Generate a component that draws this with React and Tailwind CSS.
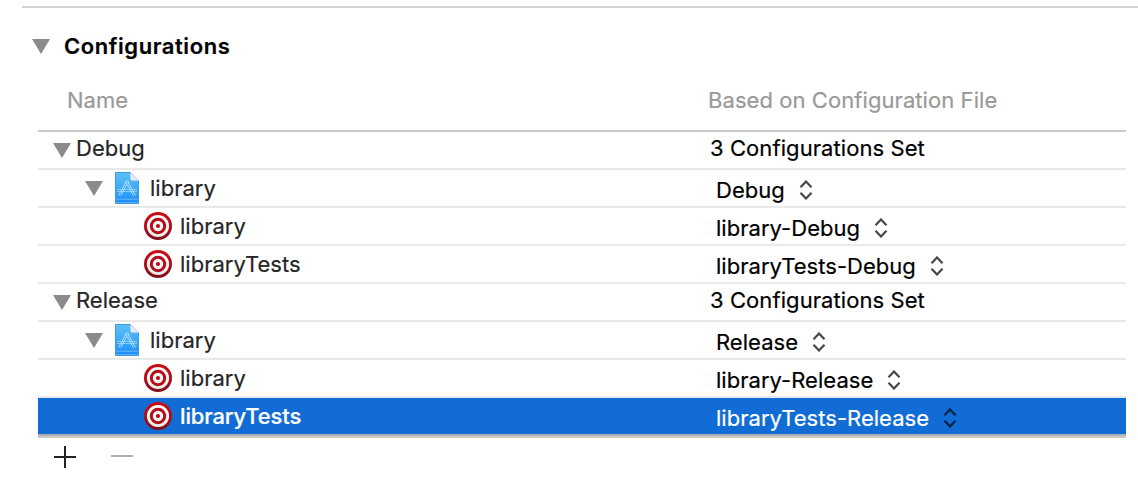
const rows = [
  { kind: 'group', name: 'Debug', value: '3 Configurations Set' },
  { kind: 'project', name: 'library', value: 'Debug' },
  { kind: 'target', name: 'library', value: 'library-Debug' },
  { kind: 'target', name: 'libraryTests', value: 'libraryTests-Debug' },
  { kind: 'group', name: 'Release', value: '3 Configurations Set' },
  { kind: 'project', name: 'library', value: 'Release' },
  { kind: 'target', name: 'library', value: 'library-Release' },
  { kind: 'target', name: 'libraryTests', value: 'libraryTests-Release', selected: true },
];

function Triangle() {
  return (
    <svg width="18" height="15" viewBox="0 0 18 15" className="shrink-0">
      <path d="M0 0H18L9 15Z" fill="#8b8b8b" />
    </svg>
  );
}

function ProjectIcon() {
  return (
    <svg width="24" height="32" viewBox="0 0 24 32" className="shrink-0">
      <defs>
        <linearGradient id="sheet" x1="0" y1="0" x2="0" y2="1">
          <stop offset="0" stopColor="#5cc3f6" />
          <stop offset="0.5" stopColor="#3daaf8" />
          <stop offset="1" stopColor="#1e8bfb" />
        </linearGradient>
      </defs>
      <path d="M0.5 0.5H15.5L23.5 8.5V31.5H0.5Z" fill="url(#sheet)" stroke="#3c9be6" />
      <path d="M15.5 0.5V6.500Q15.500 8.500 17.500 8.500H23.500Z" fill="#e6eef3" stroke="#b9cedb" strokeWidth="0.7" />
      <path d="M1 27.300H23" stroke="#8fd0fc" strokeWidth="0.8" opacity="0.7" />
      <path d="M2 17.500H22M2 19.500H22" stroke="#a9dafd" strokeWidth="0.7" />
      <path d="M10.800 10.500L3.500 23.500M13.200 10.500L20.500 23.500M11.500 13L5.800 23.500M12.500 13L18.200 23.500" fill="none" stroke="#c3e7fd" strokeWidth="0.9" />
      <circle cx="12" cy="10.500" r="1.700" fill="none" stroke="#c3e7fd" strokeWidth="0.8" />
      <path d="M1 30.600H23" stroke="#6bb9fa" strokeWidth="0.8" />
    </svg>
  );
}

function TargetIcon() {
  return (
    <svg width="28" height="28" viewBox="0 0 28 28" className="shrink-0">
      <defs>
        <linearGradient id="rim" x1="0" y1="0" x2="0" y2="1">
          <stop offset="0" stopColor="#cf0a14" />
          <stop offset="0.5" stopColor="#b00d18" />
          <stop offset="1" stopColor="#7d0f18" />
        </linearGradient>
        <linearGradient id="face" x1="0" y1="0" x2="0" y2="1">
          <stop offset="0" stopColor="#ffffff" />
          <stop offset="1" stopColor="#ececec" />
        </linearGradient>
      </defs>
      <circle cx="14" cy="14" r="14" fill="url(#rim)" />
      <circle cx="14" cy="14" r="11.1" fill="url(#face)" />
      <circle cx="14" cy="14" r="6.700" fill="none" stroke="#b50d17" strokeWidth="3" />
      <circle cx="14" cy="14" r="2.1" fill="#b50d17" />
    </svg>
  );
}

function UpDown({ selected }) {
  return (
    <svg width="14" height="20" viewBox="0 0 14 20" className="shrink-0">
      <path
        d="M1.5 7.2L7 1.5L12.5 7.2M1.5 12.8L7 18.5L12.5 12.8"
        fill="none"
        stroke={selected ? '#082042' : '#474747'}
        strokeWidth="2.2"
      />
    </svg>
  );
}

const indent = { group: 'pl-[15px]', project: 'pl-[47px]', target: 'pl-[106px]' };
const labelStyle = {
  group: 'ml-[5px] pb-1',
  project: 'ml-[11px]',
  target: 'ml-2',
};

function Row({ kind, name, value, selected, last }) {
  const group = kind === 'group';
  return (
    <div
      className={`flex h-[38px] border-b-2 leading-9 ${last ? 'border-[#b0b0b0]' : 'border-[#e9e9e9]'} ${
        selected ? 'bg-[#116cd6] text-white' : 'text-black'
      }`}
    >
      <div className={`flex w-[672px] items-center ${indent[kind]}`}>
        {kind !== 'target' && <Triangle />}
        {kind === 'project' && (
          <span className="ml-3">
            <ProjectIcon />
          </span>
        )}
        {kind === 'target' && <TargetIcon />}
        <span className={`${labelStyle[kind]} ${selected ? 'font-medium tracking-[-0.15px]' : 'text-[#262626]'}`}>{name}</span>
      </div>
      <div className={`flex items-center ${group ? 'pb-1 tracking-[0.08px]' : 'pt-1 pl-[6px] tracking-[0.03px]'}`}>
        <span>{value}</span>
        {!group && (
          <span className="ml-[14px]">
            <UpDown selected={selected} />
          </span>
        )}
      </div>
    </div>
  );
}

export default function App() {
  return (
    <div className="h-[480px] overflow-hidden bg-white pt-[6px] font-['Inter','Liberation_Sans',sans-serif] text-[22px] text-black [-webkit-text-stroke:0.2px]">
      <div className="ml-[22px] h-[2px] bg-[#d3d3d3]" />
      <div className="flex h-[76px] items-center pl-8">
        <Triangle />
        <h2 className="ml-[14px] leading-9 font-semibold tracking-[0.57px]">Configurations</h2>
      </div>
      <div className="mr-3 ml-[38px]">
        <div className="flex h-12 border-b-2 border-[#c8c8c8] leading-8 text-[#999999]">
          <div className="w-[670px] pl-[29px]">Name</div>
          <div className="tracking-[0.07px]">Based on Configuration File</div>
        </div>
        {rows.map((row, i) => (
          <Row key={i} {...row} last={i === rows.length - 1} />
        ))}
        <div className="h-[2px] bg-[#cbcbcb]" />
        <div className="flex pt-2 pl-4">
          <svg width="22" height="22" viewBox="0 0 22 22">
            <path d="M11 0V22M0 11H22" stroke="#222222" strokeWidth="2" />
          </svg>
          <svg width="22" height="22" viewBox="0 0 22 22" className="ml-[35px]">
            <path d="M0 10H22" stroke="#b0b0b0" strokeWidth="2" />
          </svg>
        </div>
      </div>
    </div>
  );
}
